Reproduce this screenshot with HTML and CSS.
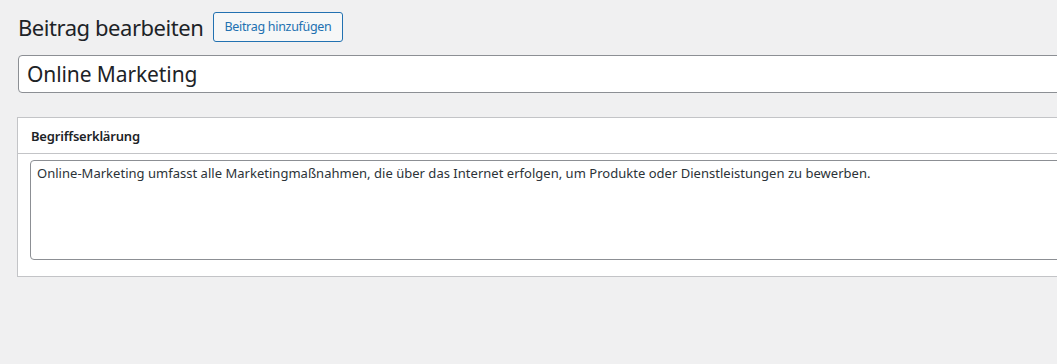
FILE: index.html
```html
<!DOCTYPE html>
<html lang="de">
<head>
<meta charset="utf-8">
<title>Beitrag bearbeiten</title>
<link rel="stylesheet" href="styles.css">
</head>
<body>
<div class="wrap">
  <div class="head-row">
    <h1 class="page-title">Beitrag bearbeiten</h1>
    <a class="title-action" href="#">Beitrag hinzufügen</a>
  </div>
  <input class="title-input" type="text" value="Online Marketing">
  <div class="postbox">
    <div class="postbox-header">
      <h2 class="postbox-title">Begriffserklärung</h2>
    </div>
    <div class="postbox-inside">
      <textarea class="desc">Online-Marketing umfasst alle Marketingmaßnahmen, die über das Internet erfolgen, um Produkte oder Dienstleistungen zu bewerben.</textarea>
    </div>
  </div>
</div>
</body>
</html>
```

FILE: styles.css
```css
html, body {
  margin: 0;
  padding: 0;
  overflow: hidden;
  background: #f0f0f1;
}
body {
  font-family: "Noto Sans", "Open Sans", sans-serif;
  color: #1d2327;
  width: 1057px;
  height: 364px;
}
.wrap {
  width: 1200px;
  padding: 12px 0 0 17px;
  display: flex;
  flex-direction: column;
}
.head-row {
  display: flex;
  align-items: center;
  gap: 10px;
  margin-left: 1px;
  height: 30px;
}
.page-title {
  margin: 0;
  font-size: 22px;
  letter-spacing: -0.45px;
  font-weight: 400;
  line-height: 30px;
  color: #1d2327;
}
.title-action {
  box-sizing: border-box;
  height: 30px;
  padding: 0 10px;
  border: 1px solid #2271b1;
  border-radius: 3px;
  background: #f6f7f7;
  color: #2271b1;
  font-size: 12.5px;
  letter-spacing: -0.3px;
  line-height: 28px;
  text-decoration: none;
}
.title-input {
  box-sizing: border-box;
  margin: 13px 0 0 1px;
  height: 38px;
  width: 1150px;
  padding: 0 8px;
  border: 1px solid #8c8f94;
  border-radius: 4px;
  background: #fff;
  font-family: inherit;
  font-size: 21px;
  letter-spacing: -0.1px;
  color: #1d2327;
}
.postbox {
  margin-top: 24px;
  width: 1150px;
  background: #fff;
  border: 1px solid #c3c4c7;
}
.postbox-header {
  height: 35px;
  border-bottom: 1px solid #c3c4c7;
  display: flex;
  align-items: center;
  padding-left: 13px;
}
.postbox-title {
  margin: 0;
  font-size: 13px;
  letter-spacing: -0.2px;
  font-weight: 600;
  color: #1d2327;
}
.postbox-inside {
  padding: 6px 0 16px 12px;
}
.desc {
  box-sizing: border-box;
  display: block;
  width: 1130px;
  height: 100px;
  margin: 0;
  padding: 3px 6px;
  border: 1px solid #8c8f94;
  border-radius: 4px;
  font-family: inherit;
  font-size: 13px;
  letter-spacing: 0.02px;
  line-height: 1.4;
  color: #2c3338;
  resize: none;
}
```
